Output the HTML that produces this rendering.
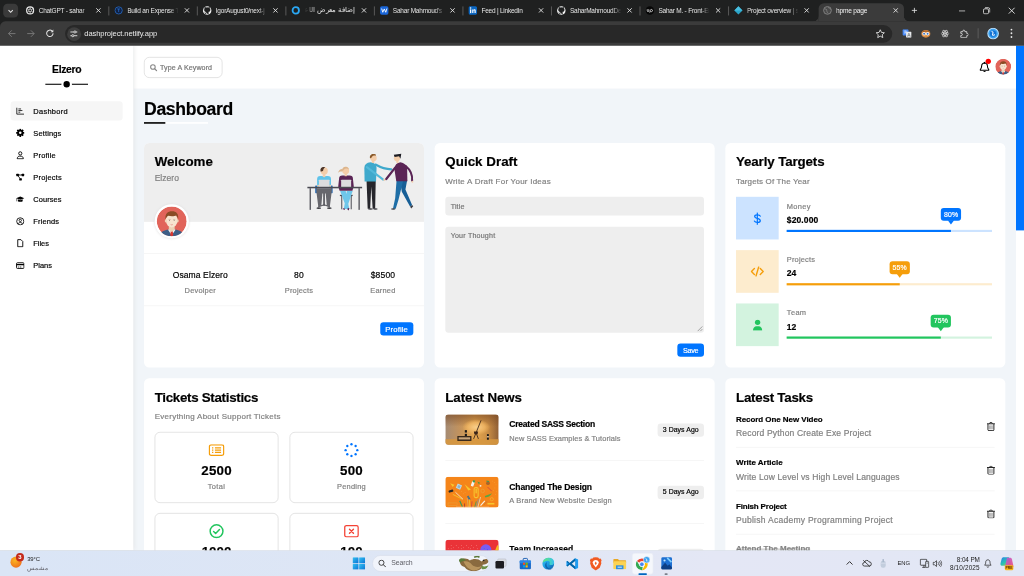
<!DOCTYPE html>
<html lang="en">
<head>
<meta charset="utf-8">
<title>hpme page</title>
<style>
*{box-sizing:border-box}
html,body{margin:0;padding:0;width:1024px;height:576px;overflow:hidden;background:#f1f5f9}
body{font-family:"Liberation Sans","Noto Sans CJK SC",sans-serif;color:#000}
#screen{position:absolute;left:0;top:0;width:1920px;height:1080px;transform:scale(0.5333333);transform-origin:0 0;overflow:hidden;background:#f1f5f9}
svg{display:block}
/* ---------- browser chrome ---------- */
.tabstrip{position:absolute;left:0;top:0;width:1920px;height:54px;background:#1f2020}
.toolbar{position:absolute;left:0;top:40px;width:1920px;height:46px;z-index:5;background:#3b3b3b;border-top-left-radius:10px}
.tab{position:absolute;top:0;height:40px;width:166px;color:#e6e6e6;font-size:12.2px}
.tab .fav{position:absolute;left:7.8px;top:11px;width:17px;height:17px}
.tab .tt{position:absolute;left:32.6px;top:12px;white-space:nowrap;width:96px;overflow:hidden;line-height:16px;letter-spacing:-.42px;
 -webkit-mask-image:linear-gradient(90deg,#000 82%,transparent 100%);mask-image:linear-gradient(90deg,#000 82%,transparent 100%)}
.tab .x{position:absolute;left:138.9px;top:14px;width:11px;height:11px}
.tab .sep{position:absolute;right:1.5px;top:12px;width:2px;height:17px;background:#555}
.tab.active{color:#f4f4f4;font-size:12.4px;background:#3b3b3b;top:6px;height:34px;border-radius:10px 10px 0 0}
.tab.active .fav{top:5px}.tab.active .tt{top:6px}.tab.active .x{top:8px}
.tab.active:before,.tab.active:after{content:"";position:absolute;bottom:0;width:10px;height:10px;background:radial-gradient(circle at 0 0,transparent 9.5px,#3b3b3b 10.5px)}
.tab.active:before{left:-10px}
.tab.active:after{right:-10px;background:radial-gradient(circle at 100% 0,transparent 9.5px,#3b3b3b 10.5px)}
.urlbox{position:absolute;left:122px;top:7px;width:1551px;height:33px;border-radius:17px;background:#282828}
.urltxt{position:absolute;left:36px;top:7px;font-size:14.2px;color:#e9e9e9;line-height:18px;letter-spacing:.15px}
.tico{position:absolute}
/* ---------- page ---------- */
.viewport{position:absolute;left:0;top:85px;width:1920px;height:947px;overflow:hidden;background:#f1f5f9}
.scrollbar{position:absolute;right:0;top:0;width:15px;height:947px;background:#fff}
.scrollbar i{position:absolute;left:0;top:0;width:15px;height:347px;background:#0075ff}
.sidebar{position:absolute;left:0;top:0;width:250px;height:947px;background:#fff;box-shadow:0 0 10px #ddd;padding:20px}
.sidebar h3{margin:0;position:relative;top:0px;height:48px;line-height:48px;text-align:center;font-size:19.5px;font-weight:bold}
.sidebar .ln{position:absolute;left:85px;top:72px;width:80px;height:2px;background:#000}
.sidebar .dot{position:absolute;left:115px;top:63px;width:20px;height:20px;border-radius:50%;background:#000;border:4px solid #fff}
.sidebar ul{list-style:none;margin:36.6px 0 0;padding:0}
.sidebar li{height:36.4px;margin-bottom:5px;border-radius:6px;position:relative;font-size:14px;line-height:36.4px;padding-top:.9px;padding-left:42.5px;color:#000;white-space:nowrap}
.sidebar li.active{background:#f6f6f6}
.sidebar li svg{position:absolute;left:10px;top:10.5px;width:16px;height:16px}
.content{position:absolute;left:250px;top:0;width:1655px;height:947px;overflow:hidden}
.head{position:absolute;left:0;top:0;width:1655px;height:80.5px;background:#fff}
.search{position:absolute;left:20px;top:21.5px;width:146.6px;height:39.3px;border:1px solid #ccc;border-radius:10px;background:#fff}
.search svg{position:absolute;left:10px;top:12.3px;width:14px;height:14px}
.search span{position:absolute;left:29px;top:1.6px;line-height:36.5px;font-size:13.3px;color:#757575;white-space:nowrap}
.bell{position:absolute;left:1586px;top:31px;width:20px;height:21px}
.reddot{position:absolute;left:1598px;top:24.5px;width:10px;height:10px;border-radius:50%;background:#f00}
.havatar{position:absolute;left:1615.5px;top:25px;width:30px;height:30px}
h1{position:absolute;left:20px;top:97.8px;margin:0;font-size:33px;line-height:44px;font-weight:bold;white-space:nowrap}
.h1w{position:absolute;left:20px;top:144px;width:120px;height:3px;background:#fff}
.h1b{position:absolute;left:20px;top:144px;width:40px;height:3px;background:#000}
.card{position:absolute;width:525px;background:#fff;border-radius:10px;overflow:hidden}
.c1{left:20px}.c2{left:565px}.c3{left:1110px}
.r1{top:183px;height:420.6px}.r2{top:623.7px;height:420px}
.card h2{position:absolute;left:20px;top:19px;margin:0;font-size:25px;line-height:33px;font-weight:bold;white-space:nowrap}
.card .sub{position:absolute;left:20px;top:62px;margin:0;font-size:15px;line-height:20px;color:#808080;white-space:nowrap}
.abs{position:absolute;white-space:nowrap}
.grey{color:#808080}
.btn{position:absolute;background:#0075ff;color:#fff;border-radius:6px;font-size:14.5px;text-align:center;padding-top:.8px}

.tip{position:absolute;width:38px;height:23.500px;border-radius:5.500px;color:#fff;font-size:13px;text-align:center;line-height:23.500px;white-space:nowrap}
.tip i{position:absolute;left:13px;top:22.500px;width:0;height:0;border:6px solid transparent;border-top-width:8px;border-bottom:0}
.tbox{position:absolute;width:232px;height:132.500px;border:1px solid #ccc;border-radius:10px}
.tbox .num{position:absolute;left:0;top:52.5px;width:230px;text-align:center;font-size:25px;font-weight:bold;line-height:34px}
.tbox .lbl{position:absolute;left:0;top:92px;width:230px;text-align:center;font-size:14px;color:#808080;line-height:19px}

.thumb{left:20px;width:100px;height:57.400px;border-radius:6px;overflow:hidden}
.ntitle{left:140px;font-size:16px;line-height:22px;font-weight:bold}
.nsub{left:140px;font-size:14px;line-height:19px;color:#808080}
.nbadge{left:417.800px;width:87.200px;height:24.700px;border-radius:6px;background:#eee;font-size:13px;line-height:24.700px;text-align:center}
.nsep{left:20px;width:485px;height:1px;background:#eee}
.ttitle{left:20px;font-size:15px;line-height:20px;font-weight:bold}
.tsub{left:20px;font-size:16px;line-height:22px;color:#808080}
.trash{left:490.300px;width:16px;height:17.200px}
.tsep{left:20px;width:485px;height:1px;background:#eee}
.taskbar{position:absolute;left:0;top:1032px;width:1920px;height:48px;background:linear-gradient(90deg,#dae5f6 0%,#dee6f5 40%,#e4e7f5 70%,#e2e7f5 100%);border-top:1px solid #cfd6e2}
.content,.sidebar{-webkit-text-stroke:.35px currentColor}
/*FIT*/
#t_h1{letter-spacing:-0.61px}
#t_logo{letter-spacing:-0.63px}
#t_s1{letter-spacing:0.52px}
#t_s2{letter-spacing:0.26px}
#t_search{letter-spacing:0.17px}
#t_welcome{letter-spacing:-0.05px}
#t_elz{letter-spacing:0.03px}
#t_osama{letter-spacing:0.18px}
#t_dev{letter-spacing:0.36px}
#t_quick{letter-spacing:0.06px}
#t_quicksub{letter-spacing:0.44px}
#t_yearly{letter-spacing:-0.23px}
#t_yearlysub{letter-spacing:0.27px}
#t_20000{letter-spacing:0.17px}
#t_tickets{letter-spacing:-0.55px}
#t_ticketssub{letter-spacing:0.48px}
#t_2500{letter-spacing:0.44px}
#t_news{letter-spacing:-0.21px}
#t_n1{letter-spacing:-0.47px}
#t_n1s{letter-spacing:0.13px}
#t_tasks{letter-spacing:-0.45px}
#t_k1{letter-spacing:-0.12px}
#t_k1s{letter-spacing:0.29px}
#t_n2{letter-spacing:-0.25px}
#t_n2s{letter-spacing:0.34px}
#t_k2{letter-spacing:-0.01px}
#t_k2s{letter-spacing:0.24px}
#t_k3{letter-spacing:-0.31px}
#t_k3s{letter-spacing:0.48px}
#t_n1b{letter-spacing:0.10px}
#t_n2b{letter-spacing:0.10px}
#t_money{letter-spacing:0.59px}
#t_projects2{letter-spacing:0.31px}
#t_team{letter-spacing:0.63px}
#t_total{letter-spacing:0.65px}
#t_pending{letter-spacing:0.36px}
#t_500{letter-spacing:0.34px}
#t_80{letter-spacing:0.38px}
#t_projs{letter-spacing:0.31px}
#t_8500{letter-spacing:0.32px}
#t_earned{letter-spacing:0.35px}
#t_profile{letter-spacing:0.21px}
#t_save{letter-spacing:-0.57px}
#t_title{letter-spacing:0.28px}
#t_thought{letter-spacing:0.39px}
#t_p80{letter-spacing:0.26px}
#t_p55{letter-spacing:0.26px}
#t_p75{letter-spacing:0.26px}
#t_temp{letter-spacing:-0.19px}
#t_srch{letter-spacing:-0.18px}
#t_eng{letter-spacing:-0.32px}
#t_time{letter-spacing:-0.25px}
#t_date{letter-spacing:0.26px}
#t_s3{letter-spacing:0.38px}
#t_s4{letter-spacing:0.36px}
#t_s5{letter-spacing:0.13px}
#t_s6{letter-spacing:0.27px}
#t_s7{letter-spacing:-0.10px}
#t_s8{letter-spacing:-0.03px}
#t_url{letter-spacing:-0.18px}
/*/FIT*/
</style>
</head>
<body>
<div id="screen">
<svg width="0" height="0" style="position:absolute"><defs>
<symbol id="avatar" viewBox="0 0 56 56">
<clipPath id="avc"><circle cx="28" cy="28" r="28"/></clipPath>
<g clip-path="url(#avc)">
<circle cx="28" cy="28" r="28" fill="#e1645a"/>
<path d="M5 56c1-7 6-10 14-12l9-1 9 1c8 2 13 5 14 12z" fill="#3d5e86"/>
<path d="M21 44l7 10 7-10-7-3z" fill="#f4f6f8"/>
<path d="M26.300 46h3.400l1.300 8-3 2.500-3-2.500z" fill="#d8362f"/>
<path d="M22.500 36h11v8l-5.500 4-5.500-4z" fill="#ecd0b4"/>
<ellipse cx="28" cy="26" rx="11" ry="13.500" fill="#f7e3cf"/>
<ellipse cx="16.800" cy="27" rx="1.800" ry="3" fill="#f0d3b8"/><ellipse cx="39.200" cy="27" rx="1.800" ry="3" fill="#f0d3b8"/>
<path d="M16.500 24c-1.500-10 4-15 12-15s13 5 11.500 15c-1-3-2-5.500-3.500-7-3 1.500-10 2-15 .5-2 1-3.500 3.500-5 6.500z" fill="#8a4b25"/>
<path d="M22 24.500h4M30.500 24.500h4" stroke="#b9a08c" stroke-width="1"/>
<circle cx="24" cy="26.500" r=".900" fill="#6a5a50"/><circle cx="32.500" cy="26.500" r=".900" fill="#6a5a50"/>
<path d="M26 34q2 1.200 4 0" stroke="#d77" stroke-width="1.100" fill="none"/>
</g></symbol>
<symbol id="trash" viewBox="0 0 15 17"><path d="M.8 3.600h13.400" stroke="#000" stroke-width="1.600" stroke-linecap="round"/><path d="M5 3.300l.9-2.200h3.200l.9 2.200" fill="none" stroke="#000" stroke-width="1.400" stroke-linejoin="round"/><path d="M2 4.200v10.300a1.800 1.800 0 0 0 1.800 1.800h7.400a1.800 1.800 0 0 0 1.800-1.800V4.200" fill="none" stroke="#000" stroke-width="1.600"/><path d="M5.200 6.500v7.300M7.500 6.500v7.300M9.800 6.500v7.300" stroke="#555" stroke-width="1"/></symbol>
</defs></svg>
<!--CHROME-->
<div class="tabstrip">
  <div class="tico" style="left:6px;top:7px;width:28px;height:26px;border-radius:8px;background:#3a3a3a"></div>
  <svg class="tico" style="left:13px;top:14.500px" width="14" height="12" viewBox="0 0 14 12"><path d="M3 4 L7 8 L11 4" fill="none" stroke="#e6e6e6" stroke-width="2"/></svg>

  <div class="tab" style="left:40.0px"><svg class="fav" viewBox="0 0 17 17"><circle cx="8.5" cy="8.5" r="6.6" fill="none" stroke="#e8e8e8" stroke-width="2.2"/><circle cx="8.5" cy="8.5" r="2.6" fill="none" stroke="#e8e8e8" stroke-width="1.4"/><path d="M8.5 2v4M8.5 11v4M2.9 5.2l3.4 2M10.7 9.8l3.4 2M2.9 11.8l3.4-2M10.7 7.2l3.4-2" stroke="#e8e8e8" stroke-width="1.1"/></svg><span class="tt">ChatGPT - sahar</span><svg class="x" viewBox="0 0 11 11"><path d="M1.5 1.5l8 8M9.5 1.5l-8 8" stroke="#e6e6e6" stroke-width="1.7"/></svg><i class="sep"></i></div>

  <div class="tab" style="left:206.0px"><svg class="fav" viewBox="0 0 17 17"><circle cx="8.5" cy="8.5" r="6.800" fill="#0e2144" stroke="#2b74d6" stroke-width="1.300"/><path d="M5.800 5.800h5.400M8.500 5.800v5.800" stroke="#2b74d6" stroke-width="1.300" fill="none"/></svg><span class="tt">Build an Expense T</span><svg class="x" viewBox="0 0 11 11"><path d="M1.5 1.5l8 8M9.5 1.5l-8 8" stroke="#e6e6e6" stroke-width="1.7"/></svg><i class="sep"></i></div>

  <div class="tab" style="left:372.0px"><svg class="fav" viewBox="0 0 17 17"><circle cx="8.5" cy="8.5" r="8" fill="#f4f4f4"/><path d="M6.3 16v-2.3c-2.6.6-3.1-1.2-3.1-1.2M10.7 16v-3c0-.9-.3-1.4-.6-1.7 2-.2 3.9-1 3.9-4.2 0-.9-.3-1.7-.9-2.3.1-.3.4-1.2-.1-2.3 0 0-.7-.2-2.400.9a8 8 0 0 0-4.200 0C4.700 2.300 4 2.500 4 2.500c-.5 1.100-.2 2-.1 2.300-.6.600-.9 1.400-.9 2.300 0 3.200 1.900 4 3.900 4.200-.3.300-.5.700-.6 1.300" fill="#1f2020" stroke="#1f2020" stroke-width=".8"/></svg><span class="tt">IgorAugust0/next-j</span><svg class="x" viewBox="0 0 11 11"><path d="M1.5 1.5l8 8M9.5 1.5l-8 8" stroke="#e6e6e6" stroke-width="1.7"/></svg><i class="sep"></i></div>

  <div class="tab" style="left:538.0px"><svg class="fav" viewBox="0 0 17 17"><circle cx="8.500" cy="8.500" r="6" fill="#1f2020" stroke="#2aa8f5" stroke-width="3.400"/></svg><span class="tt" style="direction:rtl;text-align:right;-webkit-mask-image:linear-gradient(270deg,#000 78%,transparent 100%);mask-image:linear-gradient(270deg,#000 78%,transparent 100%);font-size:12.5px">إضافة معرض الأعمال</span><svg class="x" viewBox="0 0 11 11"><path d="M1.5 1.5l8 8M9.5 1.5l-8 8" stroke="#e6e6e6" stroke-width="1.7"/></svg><i class="sep"></i></div>

  <div class="tab" style="left:704.0px"><svg class="fav" viewBox="0 0 17 17"><rect x=".5" y=".5" width="16" height="16" rx="3.5" fill="#1a66d9"/><path d="M3.6 5l2.100 7 2.800-6.200 2.800 6.200 2.100-7" fill="none" stroke="#fff" stroke-width="1.700" stroke-linejoin="round"/></svg><span class="tt">Sahar Mahmoud's</span><svg class="x" viewBox="0 0 11 11"><path d="M1.5 1.5l8 8M9.5 1.5l-8 8" stroke="#e6e6e6" stroke-width="1.7"/></svg><i class="sep"></i></div>

  <div class="tab" style="left:870.0px"><svg class="fav" viewBox="0 0 17 17"><rect x=".5" y=".5" width="16" height="16" rx="3" fill="#0a66c2"/><rect x="3.300" y="6.600" width="2.300" height="7" fill="#fff"/><circle cx="4.450" cy="4.200" r="1.400" fill="#fff"/><path d="M7.400 13.600v-7h2.200v1c1.200-1.800 4.400-1.500 4.400 1.500v4.500h-2.300v-4c0-1.700-2.100-1.600-2.100 0v4z" fill="#fff"/></svg><span class="tt" style="-webkit-mask-image:none;mask-image:none">Feed | LinkedIn</span><svg class="x" viewBox="0 0 11 11"><path d="M1.5 1.5l8 8M9.5 1.5l-8 8" stroke="#e6e6e6" stroke-width="1.7"/></svg><i class="sep"></i></div>

  <div class="tab" style="left:1036.0px"><svg class="fav" viewBox="0 0 17 17"><circle cx="8.5" cy="8.5" r="8" fill="#f4f4f4"/><path d="M6.3 16v-2.3c-2.6.6-3.1-1.2-3.1-1.2M10.7 16v-3c0-.9-.3-1.4-.6-1.7 2-.2 3.9-1 3.9-4.2 0-.9-.3-1.7-.9-2.3.1-.3.4-1.2-.1-2.3 0 0-.7-.2-2.400.9a8 8 0 0 0-4.200 0C4.700 2.300 4 2.500 4 2.500c-.5 1.100-.2 2-.1 2.300-.6.600-.9 1.400-.9 2.300 0 3.200 1.900 4 3.900 4.200-.3.300-.5.700-.6 1.300" fill="#1f2020" stroke="#1f2020" stroke-width=".8"/></svg><span class="tt">SaharMahmoudDev</span><svg class="x" viewBox="0 0 11 11"><path d="M1.5 1.5l8 8M9.5 1.5l-8 8" stroke="#e6e6e6" stroke-width="1.7"/></svg><i class="sep"></i></div>

  <div class="tab" style="left:1202.0px"><svg class="fav" viewBox="0 0 17 17"><circle cx="8.5" cy="8.5" r="8" fill="#060606"/><path d="M3.600 6.300v3c0 2 2.800 2 2.800 0v-3M8.300 12.800l.9-4.300c.5-2.600 4.300-2.300 4.300.3 0 2.300-2.900 2.900-4.300.9" fill="none" stroke="#fff" stroke-width="1.300"/></svg><span class="tt">Sahar M. - Front-En</span><svg class="x" viewBox="0 0 11 11"><path d="M1.5 1.5l8 8M9.5 1.5l-8 8" stroke="#e6e6e6" stroke-width="1.7"/></svg><i class="sep"></i></div>

  <div class="tab" style="left:1368.0px"><svg class="fav" viewBox="0 0 17 17"><path d="M8.500 .800l7.700 7.700-7.700 7.700L.800 8.500z" fill="#2ba4c8"/><path d="M8.500 .800l7.700 7.700H.800z" fill="#49bfe0"/></svg><span class="tt">Project overview | s</span><svg class="x" viewBox="0 0 11 11"><path d="M1.5 1.5l8 8M9.5 1.5l-8 8" stroke="#e6e6e6" stroke-width="1.7"/></svg></div>

  <div class="tab active" style="left:1535px;width:160px"><svg class="fav" viewBox="0 0 17 17"><circle cx="8.500" cy="8.500" r="7.300" fill="#4a4a4a" stroke="#8b8b8b" stroke-width="1.500"/><path d="M3 5.500c2 1 3 .2 4 1.500s-1 2.500.5 3.500 1 3 2 3.500M10 2c-.5 1.500 1 2 2.500 2.500s1.500 2 3 2" fill="none" stroke="#8b8b8b" stroke-width="1.500"/></svg><span class="tt" style="-webkit-mask-image:none;mask-image:none">hpme page</span><svg class="x" viewBox="0 0 11 11"><path d="M1.5 1.5l8 8M9.5 1.5l-8 8" stroke="#e6e6e6" stroke-width="1.7"/></svg></div>

  <svg class="tico" style="left:1709px;top:14px" width="11" height="11" viewBox="0 0 13 13"><path d="M6.500 .500v12M.500 6.500h12" stroke="#e6e6e6" stroke-width="1.800"/></svg>
  <svg class="tico" style="left:1798px;top:19px" width="12" height="3" viewBox="0 0 12 3"><path d="M0 1.500h12" stroke="#e6e6e6" stroke-width="1.800"/></svg>
  <svg class="tico" style="left:1843px;top:13px" width="14" height="14" viewBox="0 0 14 14"><rect x="1" y="3.500" width="9.500" height="9.500" rx="2.500" fill="none" stroke="#e6e6e6" stroke-width="1.600"/><path d="M4 1.500h6a3 3 0 0 1 3 3v6" fill="none" stroke="#e6e6e6" stroke-width="1.600"/></svg>
  <svg class="tico" style="left:1890px;top:13px" width="14" height="14" viewBox="0 0 14 14"><path d="M1.500 1.500l11 11M12.500 1.500l-11 11" stroke="#e6e6e6" stroke-width="1.700"/></svg>
</div>
<div class="toolbar">
  <svg class="tico" style="left:14px;top:15px" width="16" height="16" viewBox="0 0 16 16"><path d="M15 8H2M8 2L2 8l6 6" fill="none" stroke="#7d7d7d" stroke-width="1.700"/></svg>
  <svg class="tico" style="left:50px;top:15px" width="16" height="16" viewBox="0 0 16 16"><path d="M1 8h13M8 2l6 6-6 6" fill="none" stroke="#7d7d7d" stroke-width="1.700"/></svg>
  <svg class="tico" style="left:85px;top:14px" width="17" height="17" viewBox="0 0 17 17"><path d="M14.500 8.500a6 6 0 1 1-1.900-4.400" fill="none" stroke="#e6e6e6" stroke-width="1.900"/><path d="M15 1.500v5h-5z" fill="#e6e6e6"/></svg>
  <div class="urlbox">
    <div class="tico" style="left:3.500px;top:3.500px;width:26px;height:26px;border-radius:50%;background:#3e3e3e"></div>
    <svg class="tico" style="left:9px;top:9px" width="15" height="15" viewBox="0 0 15 15"><path d="M1 4h6.500M11.500 4H14M1 11h2.500M7.500 11H14" stroke="#e6e6e6" stroke-width="1.700"/><circle cx="9.500" cy="4" r="2" fill="none" stroke="#e6e6e6" stroke-width="1.600"/><circle cx="5.500" cy="11" r="2" fill="none" stroke="#e6e6e6" stroke-width="1.600"/></svg>
    <span class="urltxt" id="t_url">dashproject.netlify.app</span>
    <svg class="tico" style="left:1519px;top:7px" width="19" height="19" viewBox="0 0 19 19"><path d="M9.500 1.800l2.300 5 5.400.6-4 3.700 1.100 5.400-4.800-2.700-4.800 2.700 1.100-5.400-4-3.700 5.400-.6z" fill="none" stroke="#e6e6e6" stroke-width="1.600" stroke-linejoin="round"/></svg>
  </div>
  <!-- extensions -->
  <svg class="tico" style="left:1691.500px;top:14.500px" width="17.500" height="16.700" viewBox="0 0 23 22"><rect x="0" y="0" width="15" height="15" rx="2" fill="#4a8af4"/><rect x="9" y="6" width="14" height="15" rx="2" fill="#e8eaed"/><path d="M3.500 4.500h7M7 3v1.500M4.500 10c3-1.500 4.500-3.500 5-5.500M5 6.500c1 2 2.500 3 4 3.500" stroke="#fff" stroke-width="1.300" fill="none"/><path d="M12.500 18l3.500-8.500 3.500 8.500M13.700 15.500h4.600" stroke="#5f6368" stroke-width="1.400" fill="none"/></svg>
  <svg class="tico" style="left:1727px;top:14px" width="18" height="18" viewBox="0 0 22 22"><ellipse cx="11" cy="11.500" rx="10.500" ry="9" fill="#d98a43"/><path d="M1 9c2-7 18-7 20 0-5-3-15-3-20 0z" fill="#a65f26"/><circle cx="7" cy="11.500" r="4" fill="#fff"/><circle cx="15" cy="11.500" r="4" fill="#fff"/><circle cx="7" cy="11.500" r="2.200" fill="#3b74c4"/><circle cx="15" cy="11.500" r="2.200" fill="#3b74c4"/><path d="M9.500 15l1.500 2.500 1.500-2.500z" fill="#f5c04a"/></svg>
  <svg class="tico" style="left:1763.500px;top:14.800px" width="16" height="16" viewBox="0 0 21 21"><g fill="none" stroke="#e8e8e8" stroke-width="1.500"><ellipse cx="10.500" cy="10.500" rx="9.500" ry="3.800"/><ellipse cx="10.500" cy="10.500" rx="9.500" ry="3.800" transform="rotate(60 10.500 10.500)"/><ellipse cx="10.500" cy="10.500" rx="9.500" ry="3.800" transform="rotate(120 10.500 10.500)"/></g><circle cx="10.500" cy="10.500" r="2" fill="#e8e8e8"/></svg>
  <svg class="tico" style="left:1798.500px;top:13.800px" width="17.500" height="17.500" viewBox="0 0 21 21"><path d="M3 6.500h4.500v-1.200a2.300 2.300 0 1 1 4.600 0v1.200H16.500v4.200h1.200a2.300 2.300 0 1 1 0 4.600H16.500V19.500H3v-4.500h1.200a2.300 2.300 0 1 0 0-4.600H3z" fill="none" stroke="#e8e8e8" stroke-width="1.800" stroke-linejoin="round"/></svg>
  <div class="tico" style="left:1833px;top:13px;width:2px;height:19px;background:#5a5a5a"></div>
  <svg class="tico" style="left:1851px;top:12px" width="22" height="22" viewBox="0 0 22 22"><circle cx="11" cy="11" r="10" fill="#3aa0ee" stroke="#bfe3ff" stroke-width="2"/><circle cx="11" cy="11" r="6" fill="#1273d6"/><path d="M8 7c2 0 3 1 3 2.500S9 12 10 13.500s3 .5 4-1" fill="none" stroke="#e8f4ff" stroke-width="2"/></svg>
  <svg class="tico" style="left:1894px;top:13px" width="5" height="19" viewBox="0 0 5 19"><circle cx="2.500" cy="2.500" r="1.800" fill="#e8e8e8"/><circle cx="2.500" cy="9.500" r="1.800" fill="#e8e8e8"/><circle cx="2.500" cy="16.500" r="1.800" fill="#e8e8e8"/></svg>
</div>
<!--/CHROME-->
<!--PAGE-->
<div class="viewport">
 <div class="content">
  <div class="head">
    <div class="search"><svg viewBox="0 0 14 14"><circle cx="5.700" cy="5.700" r="4.300" fill="none" stroke="#888" stroke-width="2"/><path d="M9 9l4 4" stroke="#888" stroke-width="2.300" stroke-linecap="round"/></svg><span id="t_search">Type A Keyword</span></div>
    <svg class="bell" viewBox="0 0 20 21"><path d="M10 2.200c-3.300 0-5.400 2.500-5.400 5.600 0 3.600-1.200 5.300-2.600 6.700-.3.400-.1 1.100.5 1.100h15c.6 0 .8-.7.500-1.100-1.400-1.400-2.600-3.100-2.600-6.700 0-3.100-2.100-5.600-5.400-5.600z" fill="#fff" stroke="#000" stroke-width="2" stroke-linejoin="round"/><path d="M10 .500v2" stroke="#000" stroke-width="2.200" stroke-linecap="round"/><path d="M7.600 17.300a2.500 2.500 0 0 0 4.800 0z" fill="#000"/></svg>
    <i class="reddot"></i>
    <svg class="havatar" viewBox="0 0 56 56"><use href="#avatar"/></svg>
  </div>
  <h1 id="t_h1">Dashboard</h1>
  <i class="h1w"></i><i class="h1b"></i>

  <!-- Welcome -->
  <div class="card c1 r1">
    <div class="abs" style="left:0;top:0;width:525px;height:148px;background:#eee"></div>
    <h2 id="t_welcome">Welcome</h2>
    <p class="abs grey" id="t_elz" style="left:20px;top:56px;margin:0;font-size:16px;line-height:22px">Elzero</p>
    <!--ILLUS-->
    <svg class="abs" style="left:285px;top:1.900px;width:243.750px;height:150px" viewBox="0 0 936 576">
      <!-- person 1 chair -->
      <rect x="138" y="298" width="14" height="56" rx="4" fill="#2f6db3"/><rect x="250" y="298" width="14" height="56" rx="4" fill="#2f6db3"/>
      <rect x="196" y="345" width="12" height="100" fill="#55555c"/><path d="M160 452l42-14 42 14" stroke="#55555c" stroke-width="8" fill="none"/>
      <path d="M146 318h112l-2 34-12 96h-22l-8-92h-24l-8 92h-22l-12-96z" fill="#67676d"/>
      <ellipse cx="164" cy="462" rx="17" ry="6" fill="#3c3c42"/><ellipse cx="240" cy="462" rx="17" ry="6" fill="#3c3c42"/>
      <path d="M152 252q0-22 22-22h56q22 0 22 22v60h-100z" fill="#5fc3ea"/>
      <rect x="193" y="214" width="18" height="20" fill="#f3cdaa"/><path d="M190 230l12 12 12-12z" fill="#f3cdaa"/>
      <circle cx="203" cy="194" r="26" fill="#f3cdaa"/><path d="M177 198c-6-26 12-38 34-30-8 4-14 12-16 24-4 4-10 8-18 6z" fill="#4a3327"/>
      <rect x="165" y="258" width="76" height="52" rx="3" fill="#dcdcde"/>
      <circle cx="160" cy="300" r="7" fill="#f3cdaa"/><circle cx="246" cy="300" r="7" fill="#f3cdaa"/>
      <!-- person 2 -->
      <rect x="316" y="366" width="92" height="9" fill="#4a4a52"/><rect x="326" y="374" width="7" height="96" fill="#4a4a52"/><rect x="394" y="374" width="7" height="96" fill="#4a4a52"/>
      <path d="M318 338h40l26 130h-18zM366 338h42l-44 130h-20z" fill="#6fc6ea"/>
      <path d="M340 462l14 4-2 8-16-4zM384 460l-4 18-10-6 2-10z" fill="#5a2455"/>
      <path d="M310 250q0-24 24-24h52q24 0 24 24l6 56-10 30h-92l-10-30z" fill="#5a2455"/>
      <rect x="350" y="212" width="16" height="20" fill="#f3cdaa"/>
      <circle cx="358" cy="193" r="25" fill="#f3cdaa"/><path d="M332 194c-2-24 16-36 36-28 8 4 12 10 12 18-10-10-26-10-36 2-2 4-6 8-12 8z" fill="#dcb58c"/><path d="M336 180c-16-2-28 10-34 28 8-10 20-12 32-10z" fill="#dcb58c"/>
      <rect x="325" y="258" width="72" height="54" rx="3" fill="#dcdcde"/>
      <!-- desk -->
      <rect x="82" y="308" width="394" height="11" fill="#4a4a52"/><rect x="98" y="318" width="9" height="156" fill="#4a4a52"/><rect x="450" y="318" width="9" height="156" fill="#4a4a52"/>
      <!-- person 3 -->
      <path d="M508 266h66l-4 200h-18l-10-160-8 160h-18z" fill="#26262c"/>
      <ellipse cx="536" cy="468" rx="18" ry="5" fill="#3c3c42"/><ellipse cx="572" cy="468" rx="16" ry="5" fill="#3c3c42"/>
      <path d="M572 148q60 34 114 34" stroke="#3fa9cc" stroke-width="16" stroke-linecap="round" fill="none"/>
      <path d="M494 270l-2-98q2-36 44-40 42 4 44 40l-4 98z" fill="#3fa9cc"/>
      <path d="M510 166l118 90" stroke="#52b9da" stroke-width="15" stroke-linecap="round"/>
      <rect x="546" y="118" width="18" height="18" fill="#f3cdaa"/>
      <circle cx="558" cy="101" r="23" fill="#f3cdaa"/><path d="M533 102c-6-24 14-36 38-28 4 2 6 6 4 10-10-4-22 0-28 8-2 6-6 12-14 10z" fill="#8a5a2b"/>
      <circle cx="636" cy="258" r="8" fill="#f3cdaa"/>
      <!-- person 4 -->
      <path d="M748 262h52l-12 66 48 112-14 12-60-108z" fill="#185f96"/>
      <path d="M724 262h48l-34 140-20 64h-20l16-76z" fill="#1f6ea6"/>
      <ellipse cx="700" cy="468" rx="16" ry="5" fill="#3c3c42"/><path d="M822 452l14-12 8 8-14 16z" fill="#3c3c42"/>
      <path d="M790 158q52 44 46 106" stroke="#5a2455" stroke-width="15" fill="none" stroke-linecap="round"/>
      <circle cx="838" cy="272" r="7" fill="#f3cdaa"/>
      <path d="M708 178q4-40 44-46 40 8 48 40l2 96h-80z" fill="#5a2455"/>
      <path d="M714 170l-64 82" stroke="#5a2455" stroke-width="16" stroke-linecap="round"/>
      <rect x="722" y="118" width="16" height="18" fill="#f3cdaa"/>
      <circle cx="727" cy="102" r="22" fill="#f3cdaa"/><path d="M704 78l54-8-6 36-10-18-32 6z" fill="#1d1d24"/>
    </svg>
<!--/ILLUS-->
    <div class="abs" style="left:20px;top:114.600px;width:64px;height:64px;border-radius:50%;background:#fff;box-shadow:0 0 5px #ddd"></div>
    <svg class="abs" style="left:24px;top:118.600px;width:56px;height:56px" viewBox="0 0 56 56"><use href="#avatar"/></svg>
    <div class="abs" style="left:0;top:206.500px;width:525px;height:1px;background:#eee"></div>
    <div class="abs" style="left:0;top:304.500px;width:525px;height:1px;background:#eee"></div>
    <div class="abs wc" style="left:5.500px;top:237px;width:200px;text-align:center;font-size:16px;line-height:22px" ><span id="t_osama">Osama Elzero</span></div>
    <div class="abs wc grey" style="left:5.500px;top:267.8px;width:200px;text-align:center;font-size:14px;line-height:19px"><span id="t_dev">Devolper</span></div>
    <div class="abs wc" style="left:190.500px;top:237px;width:200px;text-align:center;font-size:16px;line-height:22px"><span id="t_80">80</span></div>
    <div class="abs wc grey" style="left:190.500px;top:267.8px;width:200px;text-align:center;font-size:14px;line-height:19px"><span id="t_projs">Projects</span></div>
    <div class="abs wc" style="left:348px;top:237px;width:200px;text-align:center;font-size:16px;line-height:22px"><span id="t_8500">$8500</span></div>
    <div class="abs wc grey" style="left:348px;top:267.8px;width:200px;text-align:center;font-size:14px;line-height:19px"><span id="t_earned">Earned</span></div>
    <div class="btn" style="left:442.500px;top:335.800px;width:62.500px;height:25.500px;line-height:25.500px"><span id="t_profile">Profile</span></div>
  </div>

  <!-- Quick Draft -->
  <div class="card c2 r1">
    <h2 id="t_quick">Quick Draft</h2>
    <p class="sub" id="t_quicksub">Write A Draft For Your Ideas</p>
    <div class="abs" style="left:20px;top:100.700px;width:485px;height:35px;background:#eee;border-radius:6px"></div>
    <span class="abs" id="t_title" style="left:30px;top:100.700px;line-height:35px;font-size:13.300px;color:#757575">Title</span>
    <div class="abs" style="left:20px;top:156.800px;width:485px;height:199.200px;background:#eee;border-radius:6px"></div>
    <span class="abs" id="t_thought" style="left:30px;top:165px;line-height:18px;font-size:13.300px;color:#757575">Your Thought</span>
    <svg class="abs" style="left:492px;top:343px;width:11px;height:11px" viewBox="0 0 11 11"><path d="M10 1L1 10M10 6L6 10" stroke="#777" stroke-width="1.200"/></svg>
    <div class="btn" style="left:455px;top:375.600px;width:50px;height:25.800px;line-height:25.800px;font-size:13.5px"><span id="t_save">Save</span></div>
  </div>

  <!-- Yearly Targets -->
  <div class="card c3 r1">
    <h2 id="t_yearly">Yearly Targets</h2>
    <p class="sub" id="t_yearlysub">Targets Of The Year</p>
    <!-- row 1 -->
    <div class="abs" style="left:20px;top:101.300px;width:80px;height:80px;background:#cce3ff"></div>
    <svg class="abs" style="left:52px;top:130px;width:16px;height:24px" viewBox="0 0 16 24"><path d="M8 .500v23" stroke="#0075ff" stroke-width="2.200"/><path d="M13.500 7.200C12.500 4.500 3 3.800 3 8c0 4.500 10.500 2.500 10.500 7.700 0 4.500-9.800 4-11 .8" fill="none" stroke="#0075ff" stroke-width="2.400" stroke-linecap="round"/></svg>
    <span class="abs grey" id="t_money" style="left:115.300px;top:109px;font-size:14px;line-height:19px">Money</span>
    <span class="abs" id="t_20000" style="left:115.300px;top:134.3px;font-size:16px;line-height:22px;font-weight:bold">$20.000</span>
    <div class="abs" style="left:115.300px;top:162.5px;width:385px;height:4px;background:#cce3ff"></div>
    <div class="abs" style="left:115.300px;top:162.5px;width:308px;height:4px;background:#0075ff"></div>
    <div class="tip" style="left:404.300px;top:122px;background:#0075ff"><span id="t_p80">80%</span><i style="border-top-color:#0075ff"></i></div>
    <!-- row 2 -->
    <div class="abs" style="left:20px;top:201.300px;width:80px;height:80px;background:#fdecce"></div>
    <svg class="abs" style="left:47px;top:231px;width:26px;height:20px" viewBox="0 0 26 20"><path d="M7.500 4.500L2 10l5.500 5.500M18.500 4.500L24 10l-5.500 5.500M15.500 1.500l-5 17" fill="none" stroke="#f59e0b" stroke-width="2.600" stroke-linecap="round" stroke-linejoin="round"/></svg>
    <span class="abs grey" id="t_projects2" style="left:115.300px;top:209px;font-size:14px;line-height:19px">Projects</span>
    <span class="abs" id="t_24" style="left:115.300px;top:234.3px;font-size:16px;line-height:22px;font-weight:bold">24</span>
    <div class="abs" style="left:115.300px;top:262.5px;width:385px;height:4px;background:#fdecce"></div>
    <div class="abs" style="left:115.300px;top:262.5px;width:211.750px;height:4px;background:#f59e0b"></div>
    <div class="tip" style="left:308px;top:222px;background:#f59e0b"><span id="t_p55">55%</span><i style="border-top-color:#f59e0b"></i></div>
    <!-- row 3 -->
    <div class="abs" style="left:20px;top:301.300px;width:80px;height:80px;background:#d3f3df"></div>
    <svg class="abs" style="left:50.500px;top:331px;width:19px;height:21px" viewBox="0 0 19 21"><circle cx="9.500" cy="5.300" r="5" fill="#22c55e"/><path d="M.800 20.500c0-5 3-8 6.500-8h4.400c3.500 0 6.500 3 6.500 8z" fill="#22c55e"/></svg>
    <span class="abs grey" id="t_team" style="left:115.300px;top:309px;font-size:14px;line-height:19px">Team</span>
    <span class="abs" id="t_12" style="left:115.300px;top:334.3px;font-size:16px;line-height:22px;font-weight:bold">12</span>
    <div class="abs" style="left:115.300px;top:362.5px;width:385px;height:4px;background:#d3f3df"></div>
    <div class="abs" style="left:115.300px;top:362.5px;width:288.750px;height:4px;background:#22c55e"></div>
    <div class="tip" style="left:385px;top:322px;background:#22c55e"><span id="t_p75">75%</span><i style="border-top-color:#22c55e"></i></div>
  </div>

  <!-- Tickets -->
  <div class="card c1 r2">
    <h2 id="t_tickets">Tickets Statistics</h2>
    <p class="sub" id="t_ticketssub">Everything About Support Tickets</p>
    <div class="tbox" style="left:20px;top:101.500px">
      <svg class="abs" style="left:99.7px;top:21.4px;width:30px;height:22px" preserveAspectRatio="none" viewBox="0 0 30 26"><rect x="1.500" y="1.500" width="27" height="23" rx="3.500" fill="none" stroke="#f59e0b" stroke-width="2.600"/><path d="M12 8h11.500M12 13h11.500M12 18h11.500" stroke="#f59e0b" stroke-width="2.400"/><path d="M6.500 8h2.500M6.500 13h2.500M6.500 18h2.500" stroke="#f59e0b" stroke-width="2.600"/></svg>
      <span class="num"><span id="t_2500">2500</span></span><span class="lbl"><span id="t_total">Total</span></span>
    </div>
    <div class="tbox" style="left:273px;top:101.500px">
      <svg class="abs" style="left:100.7px;top:18.4px;width:28px;height:28px" viewBox="0 0 28 28"><g fill="#0075ff"><circle cx="14" cy="3" r="2.200"/><circle cx="21.800" cy="6.200" r="2.200"/><circle cx="25" cy="14" r="2.200"/><circle cx="21.800" cy="21.800" r="2.200"/><circle cx="14" cy="25" r="2.200"/><circle cx="6.200" cy="21.800" r="2.200"/><circle cx="3" cy="14" r="2.200"/><circle cx="6.200" cy="6.200" r="2.200"/></g></svg>
      <span class="num"><span id="t_500">500</span></span><span class="lbl"><span id="t_pending">Pending</span></span>
    </div>
    <div class="tbox" style="left:20px;top:253.500px">
      <svg class="abs" style="left:100.7px;top:18.4px;width:28px;height:28px" viewBox="0 0 28 28"><circle cx="14" cy="14" r="12" fill="none" stroke="#22c55e" stroke-width="2.800"/><path d="M8.500 14.500l3.800 3.800 7.200-7.600" fill="none" stroke="#22c55e" stroke-width="2.800" stroke-linecap="round" stroke-linejoin="round"/></svg>
      <span class="num"><span id="t_1000">1000</span></span><span class="lbl">Closed</span>
    </div>
    <div class="tbox" style="left:273px;top:253.500px">
      <svg class="abs" style="left:100.7px;top:20.4px;width:28px;height:24px" preserveAspectRatio="none" viewBox="0 0 30 26"><rect x="1.500" y="1.500" width="27" height="23" rx="3.500" fill="none" stroke="#f44336" stroke-width="2.600"/><path d="M11 9l8 8M19 9l-8 8" stroke="#f44336" stroke-width="2.800" stroke-linecap="round"/></svg>
      <span class="num"><span id="t_100">100</span></span><span class="lbl">Deleted</span>
    </div>
  </div>

  <!-- Latest News -->
  <div class="card c2 r2">
    <h2 id="t_news">Latest News</h2>
    <!--NEWS-->
    <svg class="abs thumb" style="top:68.0px" viewBox="0 0 100 57.400" preserveAspectRatio="none"><defs><linearGradient id="ng1" x1="0" x2="1" y1="0" y2="0"><stop offset="0" stop-color="#a58b74"/><stop offset=".28" stop-color="#c4935c"/><stop offset=".55" stop-color="#e6a850"/><stop offset=".8" stop-color="#c98d45"/><stop offset="1" stop-color="#8f5f36"/></linearGradient><radialGradient id="ng1b" cx=".58" cy=".42" r=".26"><stop offset="0" stop-color="#f8cf8c"/><stop offset=".6" stop-color="#f2b866" stop-opacity=".8"/><stop offset="1" stop-color="#f0b25c" stop-opacity="0"/></radialGradient><linearGradient id="ng1c" x1="0" x2="0" y1="0" y2="1"><stop offset="0" stop-color="#7a4a25" stop-opacity=".65"/><stop offset=".4" stop-color="#7a4a25" stop-opacity="0"/></linearGradient></defs><rect width="100" height="57.400" fill="url(#ng1)"/><rect width="100" height="57.400" fill="url(#ng1c)"/><rect width="100" height="57.400" fill="url(#ng1b)"/><rect x="0" y="46.500" width="100" height="11" fill="#d6973f" opacity=".9"/><rect x="22.500" y="40.500" width="26.500" height="9.500" rx="1" fill="#3a2a1c"/><rect x="25" y="43" width="21.500" height="4" fill="#c9a57a"/><rect x="36.500" y="29.500" width="4" height="4.500" fill="#1c1a1a"/><rect x="36.500" y="36.500" width="4" height="4" fill="#1c1a1a"/><path d="M67 11L53 46M57.500 34l4.500 12" stroke="#3a2418" stroke-width="1.600" fill="none"/><path d="M53.500 32h8l-1 5h-6z" fill="#3a2418"/><rect x="78" y="37" width="3.600" height="4" fill="#1c1a1a"/><rect x="78" y="43" width="3.600" height="4.500" fill="#1c1a1a"/><rect x="78.300" y="41" width="3" height="2" fill="#e9d9c4"/></svg>
    <span class="abs ntitle" style="top:75.5px" id="t_n1">Created SASS Section</span>
    <span class="abs nsub" style="top:103.5px" id="t_n1s">New SASS Examples &amp; Tutorials</span>
    <span class="abs nbadge" style="top:85.3px"><span id="t_n1b">3 Days Ago</span></span>
    <i class="abs nsep" style="top:154.7px"></i>

    <svg class="abs thumb" style="top:185.5px" viewBox="0 0 100 57.400" preserveAspectRatio="none"><rect width="100" height="57.400" fill="#f5851a"/><rect x="6" y="25" width="9" height="4" rx="1.500" fill="#2a2a2a" transform="rotate(-18 10 27)"/><rect x="21" y="14" width="9" height="9" fill="#b9d7e6" transform="rotate(25 25.500 18.500)"/><rect x="23" y="16" width="5" height="5" fill="#8fb4c9" transform="rotate(25 25.500 18.500)"/><path d="M36 14l12 10-5 1.500z" fill="#f7c62f"/><path d="M9 12l8 3-3 4z" fill="#f7c62f"/><rect x="49" y="8" width="5" height="10" rx="1.500" fill="#f4f1ea" transform="rotate(20 51.500 13)"/><rect x="50" y="6" width="4" height="4" fill="#3f9a58" transform="rotate(20 51.500 13)"/><path d="M60 9l5 2-2 3z" fill="#4a9a3f"/><circle cx="66" cy="17" r="1.800" fill="#f4f1ea"/><circle cx="80" cy="12" r="3.500" fill="#a8642b"/><path d="M77 8l5 1" stroke="#3f9a58" stroke-width="2"/><path d="M79 19l8 8" stroke="#c44" stroke-width="1.500"/><rect x="54" y="20" width="7.500" height="19" rx="3" fill="none" stroke="#f7c62f" stroke-width="2"/><rect x="56.500" y="22" width="2.500" height="9" fill="#f7c62f"/><circle cx="70" cy="26.500" r="3.300" fill="none" stroke="#e8a23a" stroke-width="1.300"/><path d="M74 36l14-5-6 6-7 2z" fill="#59a545"/><circle cx="87" cy="42" r="3" fill="none" stroke="#f7b52f" stroke-width="1.300"/><path d="M14 33l18 9" stroke="#f7c62f" stroke-width="1.600"/><path d="M19 29l14 13" stroke="#f4f1ea" stroke-width="1.400"/><path d="M42 36l4 7" stroke="#3c5ea8" stroke-width="3"/><path d="M43 37l2 3" stroke="#59a545" stroke-width="1.600"/><path d="M27 45l5 11" stroke="#3f9a58" stroke-width="2.200"/><path d="M41 40l2 17" stroke="#d8b26a" stroke-width="1.500"/><path d="M45 42l1 15" stroke="#f7c62f" stroke-width="1.500"/><path d="M50 46l-1 11" stroke="#c44" stroke-width="1.600"/><path d="M62 42l-4 15" stroke="#8a8f9a" stroke-width="1.600"/><path d="M66 38l-5 19" stroke="#e6d9b8" stroke-width="1.600"/><path d="M58 46l-3 11" stroke="#3f9a58" stroke-width="1.500"/><path d="M74 45l-8 9" stroke="#f4f1ea" stroke-width="2"/><path d="M78 46l-6 7" stroke="#c9762b" stroke-width="1.500"/><path d="M36 50v7" stroke="#a33" stroke-width="1.500"/><rect x="79" y="49" width="13" height="3" fill="#f7c62f"/><rect x="5" y="49" width="17" height="5" fill="none" stroke="#e8a23a" stroke-width="1"/><g fill="#f7b04a"><circle cx="88" cy="8" r=".700"/><circle cx="92" cy="11" r=".700"/><circle cx="95" cy="15" r=".700"/><circle cx="93" cy="21" r=".700"/><circle cx="96" cy="27" r=".700"/><circle cx="94" cy="33" r=".700"/><circle cx="90" cy="25" r=".700"/><circle cx="30" cy="28" r=".700"/><circle cx="34" cy="32" r=".700"/><circle cx="37" cy="29" r=".700"/></g><rect x="20" y="56.300" width="62" height="1.100" fill="#f7e9d6"/></svg>
    <span class="abs ntitle" style="top:192.9px" id="t_n2">Changed The Design</span>
    <span class="abs nsub" style="top:220.9px" id="t_n2s">A Brand New Website Design</span>
    <span class="abs nbadge" style="top:202.7px"><span id="t_n2b">5 Days Ago</span></span>
    <i class="abs nsep" style="top:272.1px"></i>

    <svg class="abs thumb" style="top:302.9px" viewBox="0 0 100 57.400" preserveAspectRatio="none"><rect width="100" height="57.400" fill="#ea3338"/><g fill="#f58a84"><circle cx="11" cy="11" r=".9"/><circle cx="20.5" cy="11" r=".9"/><circle cx="30" cy="11" r=".9"/><circle cx="39.5" cy="11" r=".9"/><circle cx="49" cy="11" r=".9"/><circle cx="58.5" cy="11" r=".9"/><circle cx="15" cy="15" r=".9"/><circle cx="24.5" cy="15" r=".9"/><circle cx="34" cy="15" r=".9"/><circle cx="43.5" cy="15" r=".9"/><circle cx="53" cy="15" r=".9"/><circle cx="5.5" cy="17" r=".9"/><circle cx="11" cy="17" r=".9"/><circle cx="30" cy="17" r=".9"/><circle cx="47" cy="17" r=".9"/><circle cx="60" cy="17" r=".9"/></g><circle cx="76" cy="19" r="10.500" fill="#7a5cf0"/><circle cx="73" cy="16.500" r="1" fill="#2f7df0"/><circle cx="79" cy="19" r="1.100" fill="#2f5df0"/><path d="M92.500 22l5-12 2.500 2v10z" fill="#f7bd1f"/></svg>
    <span class="abs ntitle" style="top:310.3px" id="t_n3">Team Increased</span>
    <span class="abs nbadge" style="top:320.1px"><span>7 Days Ago</span></span>
<!--/NEWS-->
  </div>

  <!-- Latest Tasks -->
  <div class="card c3 r2">
    <h2 id="t_tasks">Latest Tasks</h2>
    <!--TASKS-->
    <span class="abs ttitle" style="top:66.9px" id="t_k1">Record One New Video</span>
    <span class="abs tsub" style="top:93.5px" id="t_k1s">Record Python Create Exe Project</span>
    <svg class="abs trash" style="top:82.8px" viewBox="0 0 15 17"><use href="#trash"/></svg>
    <i class="abs tsep" style="top:129.4px"></i>
    <span class="abs ttitle" style="top:148.7px" id="t_k2">Write Article</span>
    <span class="abs tsub" style="top:175.1px" id="t_k2s">Write Low Level vs High Level Languages</span>
    <svg class="abs trash" style="top:164.4px" viewBox="0 0 15 17"><use href="#trash"/></svg>
    <i class="abs tsep" style="top:210.9px"></i>
    <span class="abs ttitle" style="top:230.6px" id="t_k3">Finish Project</span>
    <span class="abs tsub" style="top:256.8px" id="t_k3s">Publish Academy Programming Project</span>
    <svg class="abs trash" style="top:246.0px" viewBox="0 0 15 17"><use href="#trash"/></svg>
    <i class="abs tsep" style="top:292.4px"></i>
    <span class="abs ttitle" style="top:310.4px;opacity:.5;text-decoration:line-through" id="t_k4">Attend The Meeting</span>
<!--/TASKS-->
  </div>
 </div>

 <div class="sidebar">
   <h3 id="t_logo"><span>Elzero</span></h3>
   <i class="ln"></i><i class="dot"></i>
   <ul>
     <li class="active"><svg viewBox="0 0 16 16"><path d="M1.500 2v12h13.500" fill="none" stroke="#000" stroke-width="1.500"/><path d="M4.500 4.300h5M4.500 7.300h7.500M4.500 10.300h3.500" stroke="#000" stroke-width="1.500"/></svg><span id="t_s1">Dashbord</span></li>
     <li><svg viewBox="0 0 16 16"><g fill="#000"><rect x="6.300" y="0.300" width="3.400" height="4" rx=".600" transform="rotate(0 8 8)"/><rect x="6.300" y="0.300" width="3.400" height="4" rx=".600" transform="rotate(45 8 8)"/><rect x="6.300" y="0.300" width="3.400" height="4" rx=".600" transform="rotate(90 8 8)"/><rect x="6.300" y="0.300" width="3.400" height="4" rx=".600" transform="rotate(135 8 8)"/><rect x="6.300" y="0.300" width="3.400" height="4" rx=".600" transform="rotate(180 8 8)"/><rect x="6.300" y="0.300" width="3.400" height="4" rx=".600" transform="rotate(225 8 8)"/><rect x="6.300" y="0.300" width="3.400" height="4" rx=".600" transform="rotate(270 8 8)"/><rect x="6.300" y="0.300" width="3.400" height="4" rx=".600" transform="rotate(315 8 8)"/><circle cx="8" cy="8" r="5.700"/></g><circle cx="8" cy="8" r="2.400" fill="#fff"/></svg><span id="t_s2">Settings</span></li>
     <li><svg viewBox="0 0 16 16"><circle cx="8" cy="4.600" r="3" fill="none" stroke="#000" stroke-width="1.700"/><path d="M2.300 14.800c0-3.500 2.300-5 4.200-5h3c1.900 0 4.200 1.500 4.200 5z" fill="none" stroke="#000" stroke-width="1.700" stroke-linejoin="round"/></svg><span id="t_s3">Profile</span></li>
     <li><svg viewBox="0 0 16 16"><rect x=".500" y="2" width="5" height="4.500" rx=".800" fill="#000"/><rect x="10.500" y="2" width="5" height="4.500" rx=".800" fill="#000"/><rect x="6" y="10" width="5" height="4.500" rx=".800" fill="#000"/><path d="M5 4.200h6M4 6l4 5" stroke="#000" stroke-width="1.500" fill="none"/></svg><span id="t_s4">Projects</span></li>
     <li><svg viewBox="0 0 16 16"><path d="M8 2.500L.300 5.500 8 8.500l7.700-3z" fill="#000"/><path d="M3.500 7.800v3.500c1.500 1.600 7.500 1.600 9 0V7.800L8 9.600z" fill="#000"/><path d="M1.300 6v5.500" stroke="#000" stroke-width="1"/></svg><span id="t_s5">Courses</span></li>
     <li><svg viewBox="0 0 16 16"><circle cx="8" cy="8" r="6.700" fill="none" stroke="#000" stroke-width="1.600"/><circle cx="8" cy="6.300" r="2.200" fill="none" stroke="#000" stroke-width="1.500"/><path d="M4 12.800c.8-2 2.200-2.600 4-2.600s3.200.6 4 2.600" fill="none" stroke="#000" stroke-width="1.500"/></svg><span id="t_s6">Friends</span></li>
     <li><svg viewBox="0 0 16 16"><path d="M3.300 1.300h5.900l3.500 3.500v9.900H3.300z" fill="none" stroke="#000" stroke-width="1.700" stroke-linejoin="round"/></svg><span id="t_s7">Files</span></li>
     <li><svg viewBox="0 0 16 16"><rect x="1" y="2.700" width="14" height="10.600" rx="1.600" fill="none" stroke="#000" stroke-width="1.700"/><path d="M1 6.300h14" stroke="#000" stroke-width="2.300"/><path d="M3.500 10.600h2M7 10.600h3" stroke="#000" stroke-width="1.400"/></svg><span id="t_s8">Plans</span></li>
   </ul>
 </div>
 <div class="scrollbar"><i></i></div>
</div>
<!--/PAGE-->
<!--TASKBAR-->
<div class="taskbar">
  <svg class="tico" style="left:19px;top:9px" width="24" height="24" viewBox="0 0 24 24"><defs><radialGradient id="sun" cx=".4" cy=".35" r=".7"><stop offset="0" stop-color="#fbb523"/><stop offset="1" stop-color="#ee6f1b"/></radialGradient></defs><circle cx="11" cy="12" r="10.500" fill="url(#sun)"/></svg>
  <div class="tico" style="left:29.700px;top:4.200px;width:15.600px;height:15.600px;border-radius:50%;background:#c42b1c;color:#fff;font-size:11px;line-height:15.600px;text-align:center;font-weight:bold">3</div>
  <span class="tico" style="left:51px;top:6.800px;font-size:11px;line-height:15px;color:#222;white-space:nowrap" id="t_temp">39°C</span>
  <span class="tico" style="left:51px;top:22.500px;font-size:12px;line-height:16px;color:#5e5e66;white-space:nowrap;direction:rtl" id="t_sunny">مشمس</span>

  <svg class="tico" style="left:661px;top:11.800px" width="23.500" height="23.500" viewBox="0 0 25 25"><defs><linearGradient id="wl" x1="0" y1="0" x2="1" y2="1"><stop offset="0" stop-color="#35c1f1"/><stop offset="1" stop-color="#0a73d6"/></linearGradient></defs><g fill="url(#wl)"><rect x="0" y="0" width="11.800" height="11.800" rx="1"/><rect x="13.200" y="0" width="11.800" height="11.800" rx="1"/><rect x="0" y="13.200" width="11.800" height="11.800" rx="1"/><rect x="13.200" y="13.200" width="11.800" height="11.800" rx="1"/></g></svg>
  <div class="tico" style="left:697.500px;top:8px;width:219px;height:31px;border-radius:15.500px;background:#f1f4fb;border:1px solid #d3d9e6;overflow:hidden">
    <svg class="tico" style="left:10px;top:7px" width="15" height="15" viewBox="0 0 15 15"><circle cx="6.200" cy="6.200" r="4.800" fill="none" stroke="#2b2b2b" stroke-width="1.600"/><path d="M9.800 9.800l4.200 4.200" stroke="#2b2b2b" stroke-width="1.800" stroke-linecap="round"/></svg>
    <span class="tico" style="left:35px;top:6px;font-size:13px;line-height:16px;color:#5f5f66" id="t_srch">Search</span>
    <svg class="tico" style="left:160px;top:-1px" width="60" height="32" viewBox="0 0 60 32"><path d="M4 10c6-6 14-4 18 0 6-4 16-4 22 2 4-6 12-6 14-2-2 6-8 8-12 8 0 6-6 12-16 12-8 0-14-2-18-8-6-2-10-6-8-12z" fill="#8a6a3f"/><path d="M10 12c6-2 12 0 16 6 4 4 12 6 18 2-2 6-10 10-18 8-8-2-12-8-16-16z" fill="#b8945e"/><path d="M2 8c4-4 10-2 12 2-4 0-8 2-10 4-2-2-3-4-2-6z" fill="#5b7a3a"/><path d="M44 20c4 2 10 2 14-2-2 6-8 10-14 8z" fill="#6b8f47"/><circle cx="48" cy="10" r="1.500" fill="#222"/><path d="M30 4c4-2 8-2 10 0" stroke="#5b7a3a" stroke-width="3" fill="none"/></svg>
  </div>
  <!-- task view -->
  <svg class="tico" style="left:927px;top:12px" width="24" height="24" viewBox="0 0 24 24"><rect x="6" y="3" width="16" height="14" rx="2" fill="#d9dbe2" stroke="#b9bcc6" stroke-width="1"/><rect x="2" y="7" width="16" height="14" rx="2" fill="#1d1d22"/></svg>
  <!-- store -->
  <svg class="tico" style="left:973px;top:12px" width="24" height="24" viewBox="0 0 24 24"><path d="M8 6V3.500a1.500 1.500 0 0 1 1.500-1.500h5a1.500 1.500 0 0 1 1.500 1.500V6" fill="none" stroke="#1a5fb4" stroke-width="1.800"/><rect x="1.500" y="6" width="21" height="16.500" rx="2" fill="#1767c6"/><rect x="1.500" y="6" width="21" height="5" fill="#2a86e6"/><rect x="7.500" y="10" width="4" height="4" fill="#f25022"/><rect x="12.500" y="10" width="4" height="4" fill="#7fba00"/><rect x="7.500" y="15" width="4" height="4" fill="#00a4ef"/><rect x="12.500" y="15" width="4" height="4" fill="#ffb900"/></svg>
  <!-- edge -->
  <svg class="tico" style="left:1016px;top:12px" width="24" height="24" viewBox="0 0 24 24"><defs><linearGradient id="eg1" x1="0" y1="0" x2="1" y2="1"><stop offset="0" stop-color="#35c1f1"/><stop offset=".5" stop-color="#1b9de2"/><stop offset="1" stop-color="#0c59a4"/></linearGradient><linearGradient id="eg2" x1="0" y1="0" x2="1" y2="0"><stop offset="0" stop-color="#66eb6e"/><stop offset="1" stop-color="#35c1f1"/></linearGradient></defs><circle cx="12" cy="12" r="11" fill="url(#eg1)"/><path d="M1.500 10C3 4 8 1 13 1c6 0 10 4 10 8.500 0 3-2.500 5-5.500 5-2 0-3.500-.8-3.500-2 0-1 1-1.200 1-2.500 0-2-2-3.500-4.500-3.500-4 0-7 2-9 3.500z" fill="url(#eg2)"/><path d="M9 14c0 4 3 7.500 7.500 7.500 2 0 4-.8 5-2-2 3-6 4-9.500 3C7.500 21 5 17 6 13c.5-2 2-3.500 4-4-1 1-1 3-1 5z" fill="#0c59a4" opacity=".75"/></svg>
  <!-- vscode -->
  <svg class="tico" style="left:1060.500px;top:12px" width="24" height="24" viewBox="0 0 24 24"><path d="M17.500 1.500L23 4v16l-5.500 2.500L7 13.500 3 17l-2-1.500V8.500L3 7l4 3.500z" fill="#1f9cf0"/><path d="M17.500 1.500L7 10.500l-4-3.500-2 1.500 4.500 3.500L1 15.500 3 17l4-3.500 10.500 9z" fill="#0065a9"/><path d="M17.500 7v10l-6.500-5z" fill="#e6edf7"/></svg>
  <!-- brave -->
  <svg class="tico" style="left:1105px;top:11px" width="24" height="26" viewBox="0 0 24 26"><path d="M12 1l4.500 .500 2 2 2.500 -.500 2 3.500-1 3 .500 3-3 8-7.500 5-7.500-5-3-8 .500-3-1-3 2-3.500 2.500 .500 2-2z" fill="#f15a22"/><path d="M12 6l3.500 1 2.500 3-1.500 4L12 20l-4.500-6L6 10l2.500-3z" fill="#fff"/><path d="M12 9l2 3-2 4-2-4z" fill="#f15a22"/></svg>
  <!-- explorer -->
  <svg class="tico" style="left:1149px;top:13px" width="26" height="22" viewBox="0 0 26 22"><path d="M1 3.500A1.500 1.500 0 0 1 2.500 2h7l2.500 2.500h11.500A1.500 1.500 0 0 1 25 6v3H1z" fill="#e8a825"/><rect x="1" y="6.500" width="24" height="15" rx="1.800" fill="#fcd354"/><rect x="6" y="14" width="14" height="7.500" fill="#2f8fe0"/><rect x="9" y="16.500" width="8" height="2" fill="#c8e4fb"/></svg>
  <!-- chrome active -->
  <div class="tico" style="left:1185px;top:4px;width:40px;height:40px;border-radius:5px;background:#f5f7fc;border:1px solid #e9ecf3"></div>
  <svg class="tico" style="left:1191px;top:10px" width="28" height="28" viewBox="0 0 28 28"><circle cx="12.500" cy="15" r="11" fill="#fff"/><path d="M12.500 4a11 11 0 0 1 9.500 5.500H12.500a5.500 5.500 0 0 0-4.800 2.800L3.200 9A11 11 0 0 1 12.500 4z" fill="#ea4335"/><path d="M22 9.500a11 11 0 0 1-9 16.500l4.500-8.200a5.500 5.500 0 0 0 0-5.500z" fill="#fbbc04"/><path d="M13 26A11 11 0 0 1 3.200 9l4.500 8a5.500 5.500 0 0 0 6.500 2.500z" fill="#34a853"/><circle cx="12.500" cy="15" r="4.300" fill="#4285f4" stroke="#fff" stroke-width="1.400"/><circle cx="21.500" cy="6.500" r="6" fill="#3aa0ee" stroke="#f5f7fc" stroke-width="1"/><path d="M19.500 4.500c1.500 0 2 .800 2 1.800s-1 1.500-.500 2.500 2 .500 2.500-.500" stroke="#fff" stroke-width="1.500" fill="none"/></svg>
  <div class="tico" style="left:1197px;top:41.500px;width:16px;height:3px;border-radius:2px;background:#0067c0"></div>
  <!-- photos-like -->
  <svg class="tico" style="left:1236.500px;top:11px" width="25" height="25" viewBox="0 0 25 25"><rect x="3" y="1" width="20" height="22" rx="2.500" fill="#1d6fd1"/><path d="M3 19l7-8 5 6 3-3 5 6v1.500a2.500 2.500 0 0 1-2.500 2.500h-15A2.500 2.500 0 0 1 3 21.500z" fill="#0d3f86"/><path d="M14 2l8 8" stroke="#7fd0ff" stroke-width="3"/><circle cx="9" cy="7" r="2" fill="#bfe6ff"/></svg>
  <div class="tico" style="left:1246px;top:42px;width:6px;height:3px;border-radius:2px;background:#7b7f8a"></div>

  <!-- tray -->
  <svg class="tico" style="left:1586px;top:18px" width="14" height="9" viewBox="0 0 14 9"><path d="M1.500 7.500L7 2l5.500 5.500" fill="none" stroke="#222" stroke-width="1.700"/></svg>
  <svg class="tico" style="left:1616px;top:16px" width="18.500" height="15" viewBox="0 0 24 20"><path d="M6.500 16.500a4.500 4.500 0 0 1-.500-9A6 6 0 0 1 17.500 6a5 5 0 0 1 1 10.500z" fill="none" stroke="#222" stroke-width="2"/><path d="M3 2l17 16" stroke="#222" stroke-width="2"/></svg>
  <svg class="tico" style="left:1650px;top:15px" width="12" height="17" viewBox="0 0 16 25"><rect x="1" y="5" width="14" height="19" rx="6" fill="#c2cddd"/><rect x="6" y="0" width="4" height="9" rx="2" fill="#a9b7cb"/><path d="M1 12h14" stroke="#dfe6f3" stroke-width="1.500"/></svg>
  <span class="tico" style="left:1683px;top:16px;font-size:11px;line-height:15px;color:#222" id="t_eng">ENG</span>
  <svg class="tico" style="left:1723.500px;top:13.500px" width="20" height="20" viewBox="0 0 24 25"><rect x="1.500" y="2" width="15" height="14" rx="1.500" fill="none" stroke="#222" stroke-width="1.800"/><path d="M6 21h8M10 16v5" stroke="#222" stroke-width="1.800"/><rect x="14" y="7" width="7" height="14" rx="1" fill="#e2e7f3" stroke="#222" stroke-width="1.600"/><circle cx="17.500" cy="11" r="1.200" fill="#222"/></svg>
  <svg class="tico" style="left:1748px;top:15.500px" width="19" height="15.500" viewBox="0 0 24 20"><path d="M2 7h3.500L10 3v14l-4.500-4H2z" fill="none" stroke="#222" stroke-width="1.700" stroke-linejoin="round"/><path d="M13.500 6.500a5 5 0 0 1 0 7M16.500 4a8.500 8.500 0 0 1 0 12M19.500 2a11.500 11.500 0 0 1 0 16" fill="none" stroke="#222" stroke-width="1.500"/></svg>
  <span class="tico" style="left:1737px;width:100px;text-align:right;top:9px;font-size:12px;line-height:15px;color:#222;white-space:nowrap"><span id="t_time">8:04 PM</span></span>
  <span class="tico" style="left:1737px;width:100px;text-align:right;top:24px;font-size:12px;line-height:15px;color:#222;white-space:nowrap"><span id="t_date">8/10/2025</span></span>
  <svg class="tico" style="left:1845px;top:15px" width="14.500" height="17" viewBox="0 0 18 21"><path d="M9 2C5.500 2 4 4.800 4 7.500c0 3.500-1 5-2.500 7h15C15 12.500 14 11 14 7.500 14 4.800 12.500 2 9 2z" fill="none" stroke="#222" stroke-width="1.700" stroke-linejoin="round"/><path d="M7 17.500a2 2 0 0 0 4 0" fill="none" stroke="#222" stroke-width="1.600"/></svg>
  <svg class="tico" style="left:1874px;top:10px" width="28" height="28" viewBox="0 0 28 28"><defs><linearGradient id="cp1" x1="0" y1="0" x2="1" y2="1"><stop offset="0" stop-color="#2a7cf0"/><stop offset=".5" stop-color="#28c3b0"/><stop offset="1" stop-color="#f9c31f"/></linearGradient><linearGradient id="cp2" x1="0" y1="0" x2="1" y2="1"><stop offset="0" stop-color="#b95ae0"/><stop offset="1" stop-color="#f0476b"/></linearGradient></defs><path d="M8 2h8c2 0 3 1 3.500 3l2 9c.5 2-.5 4-3 4H6c-3 0-5-2-4-5l2-8c.5-2 2-3 4-3z" fill="url(#cp1)"/><path d="M14 3h6c2 0 3 1 3.500 3l2.500 12c.5 3-1.500 5-4 5h-8c-2 0-3-1-3.500-3z" fill="url(#cp2)" opacity=".9"/><rect x="10" y="17" width="16" height="9" rx="2" fill="#f6b61a"/><text x="18" y="24" font-size="6.500" font-weight="bold" text-anchor="middle" fill="#5a2a00" font-family="Liberation Sans, sans-serif">PRE</text></svg>
</div>
<!--/TASKBAR-->
</div>
</body>
</html>
